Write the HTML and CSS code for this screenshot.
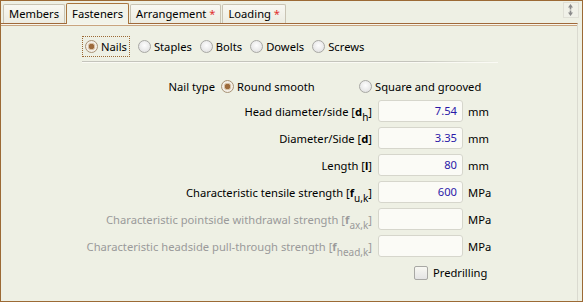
FILE: index.html
```html
<!DOCTYPE html>
<html lang="en">
<head>
    <meta charset="UTF-8">
    <title>Fasteners</title>
    <link rel="stylesheet" href="styles.css">
</head>
<body>
    <div class="window">
        <div class="tabs">
            <div class="tab">Members</div>
            <div class="tab active">Fasteners</div>
            <div class="tab">Arrangement <span class="req">*</span></div>
            <div class="tab">Loading <span class="req">*</span></div>
            <div class="tab-scroll">
                <svg width="13" height="14" viewBox="0 0 13 14">
                    <path d="M6.5 1 L9 4.5 H7.3 V6.5 H5.7 V4.5 H4 Z" fill="#8a8a8a"/>
                    <path d="M6.5 13 L9 9.5 H7.3 V7.5 H5.7 V9.5 H4 Z" fill="#8a8a8a"/>
                </svg>
            </div>
        </div>

        <div class="panel">
            <div class="types">
                <label class="opt focus"><span class="radio on"></span>Nails</label>
                <label class="opt"><span class="radio"></span>Staples</label>
                <label class="opt"><span class="radio"></span>Bolts</label>
                <label class="opt"><span class="radio"></span>Dowels</label>
                <label class="opt"><span class="radio"></span>Screws</label>
            </div>
            <div class="sep"></div>

            <div class="nail-type">
                <span class="nt-label">Nail type</span>
                <label class="opt"><span class="radio on"></span>Round smooth</label>
                <label class="opt"><span class="radio"></span>Square and grooved</label>
            </div>

            <div class="fields">
                <span class="lbl">Head diameter/side [<b>d</b><sub>h</sub>]</span>
                <div class="inp">7.54</div>
                <span class="unit">mm</span>

                <span class="lbl">Diameter/Side [<b>d</b>]</span>
                <div class="inp">3.35</div>
                <span class="unit">mm</span>

                <span class="lbl">Length [<b>l</b>]</span>
                <div class="inp">80</div>
                <span class="unit">mm</span>

                <span class="lbl">Characteristic tensile strength [<b>f</b><sub>u,k</sub>]</span>
                <div class="inp">600</div>
                <span class="unit">MPa</span>

                <span class="lbl off">Characteristic pointside withdrawal strength [<b>f</b><sub>ax,k</sub>]</span>
                <div class="inp"></div>
                <span class="unit">MPa</span>

                <span class="lbl off">Characteristic headside pull-through strength [<b>f</b><sub>head,k</sub>]</span>
                <div class="inp"></div>
                <span class="unit">MPa</span>
            </div>

            <label class="predrill"><span class="check"></span>Predrilling</label>
        </div>
    </div>
</body>
</html>
```

FILE: styles.css
```css
body {
    margin: 0;
    font-family: "Noto Sans", sans-serif;
    font-size: 11.2px;
    color: #000;
}

.window {
    width: 583px;
    height: 302px;
    box-sizing: border-box;
    border: 1px solid #9c6a35;
    background: #eef0e4;
    overflow: hidden;
}

/* tab strip */
.tabs {
    display: flex;
    align-items: flex-end;
    height: 22px;
    padding-left: 2px;
    gap: 1px;
    position: relative;
}

.tab {
    height: 18px;
    line-height: 17px;
    padding: 0 5px;
    border: 1px solid #c9c4b4;
    border-bottom: none;
    border-radius: 2px 2px 0 0;
    background: linear-gradient(#f8f8f2, #ecece2);
}

.tab.active {
    height: 20px;
    line-height: 20px;
    border-color: #a8753f;
    background: #f2f3e9;
    margin-bottom: -1px;
    position: relative;
    z-index: 1;
}

.req {
    color: #e03030;
}

.tab-scroll {
    position: absolute;
    right: 3px;
    top: 1px;
    width: 14px;
    height: 14px;
    border: 1px solid #e0e0d6;
    background: #f0f1e8;
}

.tab-scroll svg {
    display: block;
}

/* content panel */
.panel {
    margin-right: 4px;
    height: 280px;
    border-top: 1px solid #a0693a;
    border-right: 1px solid #dadad0;
    box-shadow: inset 0 1px 0 #f6f6ee, inset 0 2px 0 #c9a47e;
    padding-top: 12px;
}

.opt {
    display: flex;
    align-items: center;
    gap: 3px;
}

.radio {
    width: 11px;
    height: 11px;
    border: 1px solid #a8a8a4;
    border-radius: 50%;
    background: radial-gradient(circle at 50% 40%, #fdfdfd, #dcdcdc);
}

.radio.on {
    border-color: #a89276;
    background: radial-gradient(circle, #9c6a3c 0 2.5px, #d8c2a6 3px 3.5px, #f3eee6 4px);
}

.types {
    display: flex;
    margin-left: 81px;
    gap: 8px;
    height: 21px;
    align-items: center;
}

.types .focus {
    border: 1px dotted #9c6a35;
    height: 19px;
    padding: 0 2px;
}

.sep {
    margin: 4px 0 0 81px;
    width: 416px;
    height: 1px;
    background: linear-gradient(to right, #c4c4bc 80%, #eef0e4);
    box-shadow: 0 1px 0 #fafaf4;
}

.nail-type {
    display: grid;
    grid-template-columns: 214px 132px auto;
    column-gap: 6px;
    align-items: center;
    margin-top: 15px;
    height: 18px;
}

.nt-label {
    text-align: right;
}

.fields {
    display: grid;
    grid-template-columns: 371px 85px auto;
    column-gap: 6px;
    row-gap: 5px;
    grid-auto-rows: 22px;
    align-items: center;
    margin-top: 5px;
}

.lbl {
    text-align: right;
    white-space: nowrap;
}

.lbl.off {
    color: #9a9a9a;
}

sub {
    font-size: 10px;
    line-height: 0;
    vertical-align: -5px;
}

.inp {
    height: 20px;
    line-height: 20px;
    box-sizing: content-box;
    border: 1px solid #d6d6cc;
    border-radius: 3px;
    background: #fbfbf6;
    text-align: right;
    padding-right: 5px;
    color: #2a18a8;
}

.unit {
    margin-left: -1px;
}

.predrill {
    display: flex;
    align-items: center;
    gap: 5px;
    margin: 8px 0 0 413px;
    width: max-content;
}

.check {
    width: 12px;
    height: 12px;
    border: 1px solid #a8a8a4;
    border-radius: 2px;
    background: linear-gradient(#f8f8f2, #e4e4e4);
}
```
